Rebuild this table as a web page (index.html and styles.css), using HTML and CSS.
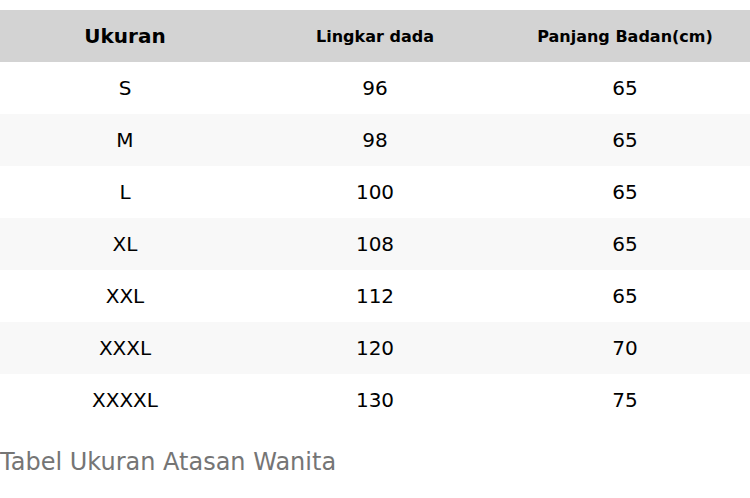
FILE: index.html
```html
<!DOCTYPE html>
<html>
<head>
<meta charset="utf-8">
<link rel="stylesheet" href="styles.css">
</head>
<body>
<div class="page">
  <table class="size-table">
    <thead>
      <tr>
        <th class="th-main">Ukuran</th>
        <th>Lingkar dada</th>
        <th>Panjang Badan(cm)</th>
      </tr>
    </thead>
    <tbody>
      <tr><td>S</td><td>96</td><td>65</td></tr>
      <tr><td>M</td><td>98</td><td>65</td></tr>
      <tr><td>L</td><td>100</td><td>65</td></tr>
      <tr><td>XL</td><td>108</td><td>65</td></tr>
      <tr><td>XXL</td><td>112</td><td>65</td></tr>
      <tr><td>XXXL</td><td>120</td><td>70</td></tr>
      <tr><td>XXXXL</td><td>130</td><td>75</td></tr>
    </tbody>
  </table>
  <p class="caption">Tabel Ukuran Atasan Wanita</p>
</div>
</body>
</html>
```

FILE: styles.css
```css
html, body {
  margin: 0;
  padding: 0;
  background: #ffffff;
}

.page {
  padding-top: 10px;
  font-family: "DejaVu Sans", sans-serif;
  color: #000000;
}

.size-table {
  width: 750px;
  border-collapse: collapse;
  table-layout: fixed;
}

.size-table th,
.size-table td {
  height: 52px;
  padding: 0;
  text-align: center;
  vertical-align: middle;
  width: 250px;
}

.size-table thead tr {
  background: #d3d3d3;
}

.size-table th {
  font-size: 16px;
  font-weight: bold;
}

.size-table th.th-main {
  font-size: 20px;
}

.size-table td {
  font-size: 20px;
}

.size-table tbody tr:nth-child(even) {
  background: #f8f8f8;
}

.caption {
  margin: 0;
  padding-top: 22px;
  font-size: 24px;
  line-height: 28px;
  color: #757575;
}
```
